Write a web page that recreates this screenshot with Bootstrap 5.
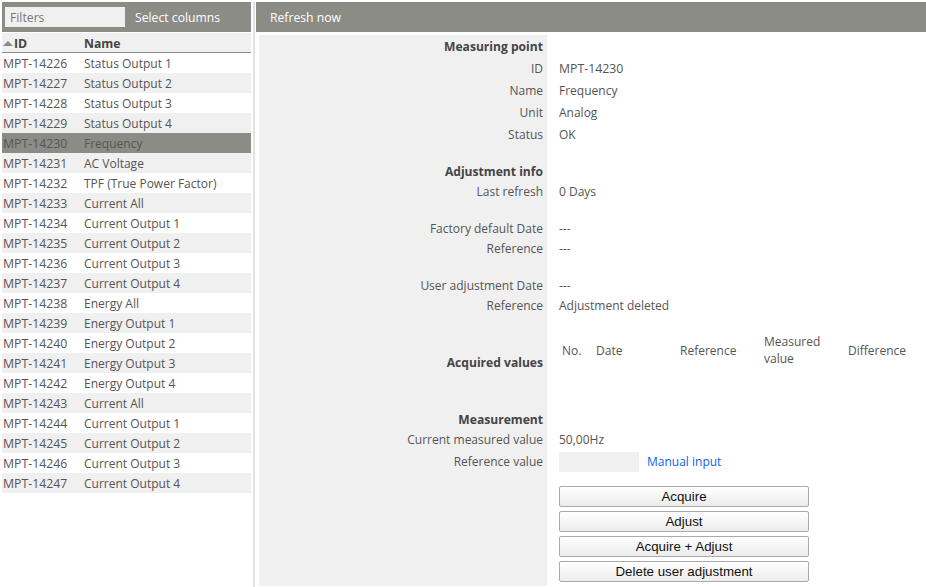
<!DOCTYPE html>
<html lang="en">
<head>
<meta charset="utf-8">
<title>Adjustment</title>
<link rel="stylesheet" href="https://cdn.jsdelivr.net/npm/bootstrap@5.3.0/dist/css/bootstrap.min.css">
<style>
html,body{height:100%;overflow:hidden}
body{font-family:"Open Sans","Noto Sans",sans-serif;font-size:12px;color:#555;background:#fff;line-height:20px}
.shell{height:587px;padding-top:2px}
.left-pane{width:255px;border-right:2px solid #e2e2e2;padding:0 2px;height:585px;flex:none}
.right-pane{flex:1;min-width:0;margin-left:1px;height:585px}
.top-bar{background:#8c8c86;color:#fff;height:30px;font-size:12.2px}
.left-bar{padding:0 3px}
.filter-box{width:120px;height:20px;background:#f0f0f0;color:#777;padding-left:5px;line-height:22px}
.bar-btn{margin-left:10px;padding-top:1px}
.refresh-btn{margin-left:14px;padding-top:1px}
.grid-head{display:flex;background:#f0f0f0;height:20px;margin-top:1px;border-bottom:1px solid #8c8c86;font-weight:700;color:#444;line-height:22px;font-size:12.2px}
.grid-row{display:flex;height:20px;line-height:22px}
.grid-row:nth-child(even){background:#f0f0f0}
.grid-row.sel{background:#8c8c86;color:#555}
.c-id{width:82px;padding-left:1px;flex:none;font-size:12.3px}
.c-name{flex:1}
.sort-up{width:0;height:0;border-left:5px solid transparent;border-right:5px solid transparent;border-bottom:5px solid #888;display:inline-block;margin:0 1px 2px 0;vertical-align:middle}
.detail{margin-top:3px;margin-left:3px;display:grid;grid-template-columns:288px 1fr;height:552px;grid-auto-rows:min-content}
.lab{background:#f0f0f0;text-align:right;padding-right:4px;height:22px;line-height:22px}
.val{padding-left:12px;height:22px;line-height:22px}
.val.id-val{font-size:12.3px}
.lab.b{font-weight:700;color:#444;font-size:12.1px}
.lab.first,.val.first{height:23px;line-height:24px}
.h20{height:20px;line-height:20px}
.sp16{height:16px}.sp17{height:17px}
.lab.tall{height:77px;line-height:94px}
.acq-row{display:grid;grid-template-columns:34px 84px 84px 84px 84px;line-height:17px;align-items:center;height:77px;padding:0 0 9px 15px}
.lab.fill{height:auto}
.ref-row{padding-top:2px}
.lab.ref-lab{line-height:24px}
.ref-input{width:80px;height:20px;background:#f0f0f0}
.val a{color:#0d5ff0;text-decoration:none;margin-left:8px}
.btn-stack{height:auto;padding-top:14px}
.act-btn{display:block;width:250px;height:21px;margin-bottom:4px;padding:0;font:13.33px/19px "Liberation Sans",Arial,sans-serif;color:#111;background:linear-gradient(#fff,#ececec);border:1px solid #aaa;border-radius:2px;text-align:center}
</style>
</head>
<body>
<div class="shell d-flex">
  <div class="left-pane">
    <div class="top-bar left-bar d-flex align-items-center">
      <div class="filter-box">Filters</div>
      <div class="bar-btn">Select columns</div>
    </div>
    <div class="grid-head"><div class="c-id"><span class="sort-up"></span>ID</div><div class="c-name">Name</div></div>
    <div>
      <div class="grid-row"><div class="c-id">MPT-14226</div><div class="c-name">Status Output 1</div></div>
      <div class="grid-row"><div class="c-id">MPT-14227</div><div class="c-name">Status Output 2</div></div>
      <div class="grid-row"><div class="c-id">MPT-14228</div><div class="c-name">Status Output 3</div></div>
      <div class="grid-row"><div class="c-id">MPT-14229</div><div class="c-name">Status Output 4</div></div>
      <div class="grid-row sel"><div class="c-id">MPT-14230</div><div class="c-name">Frequency</div></div>
      <div class="grid-row"><div class="c-id">MPT-14231</div><div class="c-name">AC Voltage</div></div>
      <div class="grid-row"><div class="c-id">MPT-14232</div><div class="c-name">TPF (True Power Factor)</div></div>
      <div class="grid-row"><div class="c-id">MPT-14233</div><div class="c-name">Current All</div></div>
      <div class="grid-row"><div class="c-id">MPT-14234</div><div class="c-name">Current Output 1</div></div>
      <div class="grid-row"><div class="c-id">MPT-14235</div><div class="c-name">Current Output 2</div></div>
      <div class="grid-row"><div class="c-id">MPT-14236</div><div class="c-name">Current Output 3</div></div>
      <div class="grid-row"><div class="c-id">MPT-14237</div><div class="c-name">Current Output 4</div></div>
      <div class="grid-row"><div class="c-id">MPT-14238</div><div class="c-name">Energy All</div></div>
      <div class="grid-row"><div class="c-id">MPT-14239</div><div class="c-name">Energy Output 1</div></div>
      <div class="grid-row"><div class="c-id">MPT-14240</div><div class="c-name">Energy Output 2</div></div>
      <div class="grid-row"><div class="c-id">MPT-14241</div><div class="c-name">Energy Output 3</div></div>
      <div class="grid-row"><div class="c-id">MPT-14242</div><div class="c-name">Energy Output 4</div></div>
      <div class="grid-row"><div class="c-id">MPT-14243</div><div class="c-name">Current All</div></div>
      <div class="grid-row"><div class="c-id">MPT-14244</div><div class="c-name">Current Output 1</div></div>
      <div class="grid-row"><div class="c-id">MPT-14245</div><div class="c-name">Current Output 2</div></div>
      <div class="grid-row"><div class="c-id">MPT-14246</div><div class="c-name">Current Output 3</div></div>
      <div class="grid-row"><div class="c-id">MPT-14247</div><div class="c-name">Current Output 4</div></div>
    </div>
  </div>
  <div class="right-pane">
    <div class="top-bar d-flex align-items-center"><div class="refresh-btn">Refresh now</div></div>
    <div class="detail">
      <div class="lab b first">Measuring point</div><div class="val first"></div>
      <div class="lab">ID</div><div class="val id-val">MPT-14230</div>
      <div class="lab">Name</div><div class="val">Frequency</div>
      <div class="lab">Unit</div><div class="val">Analog</div>
      <div class="lab">Status</div><div class="val">OK</div>
      <div class="lab sp16"></div><div class="val sp16"></div>
      <div class="lab b h20">Adjustment info</div><div class="val h20"></div>
      <div class="lab h20">Last refresh</div><div class="val h20">0 Days</div>
      <div class="lab sp17"></div><div class="val sp17"></div>
      <div class="lab h20">Factory default Date</div><div class="val h20">---</div>
      <div class="lab h20">Reference</div><div class="val h20">---</div>
      <div class="lab sp17"></div><div class="val sp17"></div>
      <div class="lab h20">User adjustment Date</div><div class="val h20">---</div>
      <div class="lab h20">Reference</div><div class="val h20">Adjustment deleted</div>
      <div class="lab b tall">Acquired values</div>
      <div class="val acq-row"><span>No.</span><span>Date</span><span>Reference</span><span>Measured value</span><span>Difference</span></div>
      <div class="lab sp17"></div><div class="val sp17"></div>
      <div class="lab b h20">Measurement</div><div class="val h20"></div>
      <div class="lab h20">Current measured value</div><div class="val h20">50,00Hz</div>
      <div class="lab ref-lab">Reference value</div><div class="val ref-row d-flex align-items-center"><div class="ref-input"></div><a href="#">Manual input</a></div>
      <div class="lab fill"></div>
      <div class="val btn-stack">
        <button class="act-btn" type="button">Acquire</button>
        <button class="act-btn" type="button">Adjust</button>
        <button class="act-btn" type="button">Acquire + Adjust</button>
        <button class="act-btn" type="button">Delete user adjustment</button>
      </div>
    </div>
  </div>
</div>
<script src="https://cdn.jsdelivr.net/npm/bootstrap@5.3.0/dist/js/bootstrap.bundle.min.js"></script>
</body>
</html>
